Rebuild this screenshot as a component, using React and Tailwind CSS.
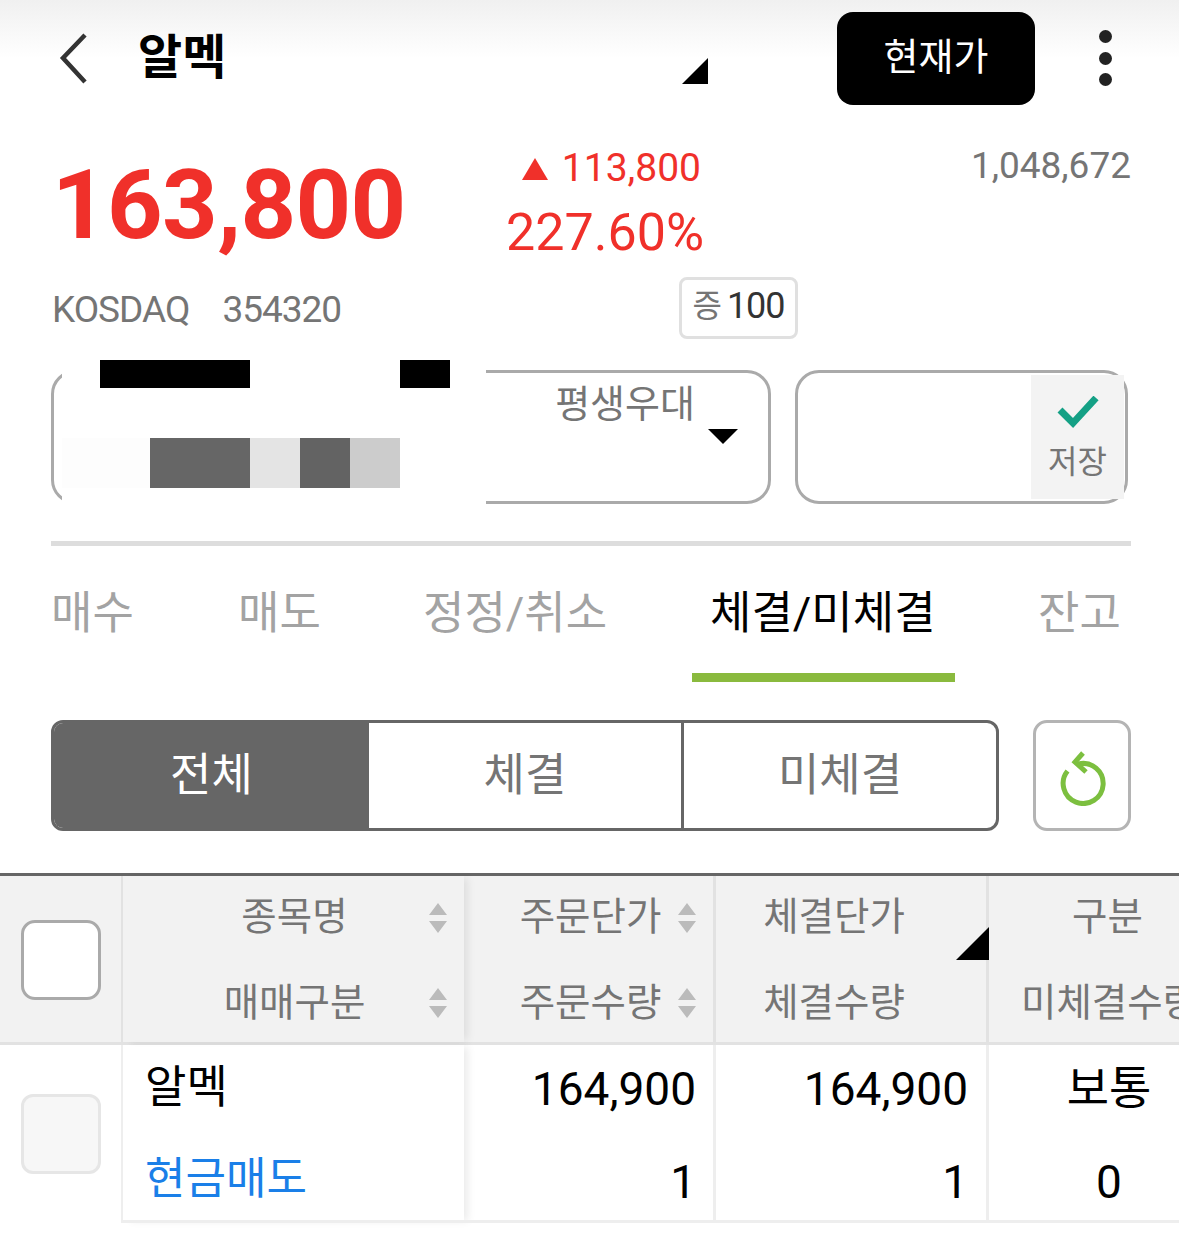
function SortArrows() {
  return (
    <svg width="20" height="30" viewBox="0 0 20 30" className="shrink-0">
      <path d="M10 0 L19 12 L1 12 Z M1 18 L19 18 L10 30 Z" fill="#bbbbbb" />
    </svg>
  );
}

function HeadCell({ label, sort, second, pad = 'pr-[16px]' }) {
  return (
    <div className={`flex h-[83px] items-center justify-between ${second ? 'pt-[5px]' : ''} ${pad}`}>
      <span className="flex-1 whitespace-nowrap text-center text-[38.5px] leading-none text-[#757575]">{label}</span>
      {sort && <SortArrows />}
    </div>
  );
}

function Tab({ label, active }) {
  return (
    <div className={`whitespace-nowrap text-[45px] leading-none ${active ? 'text-black' : 'text-[#a3a3a3]'}`}>
      {label}
    </div>
  );
}

export default function App() {
  return (
    <div className="h-[1238px] w-[1179px] overflow-hidden bg-white font-['Roboto','Noto_Sans_CJK_KR',sans-serif]">
      {/* Header */}
      <div className="flex h-[117px] items-start bg-gradient-to-b from-[#f0f0f0] via-white to-white pt-[12px]">
        <svg width="40" height="56" viewBox="0 0 40 56" className="ml-[54px] mt-[18px]">
          <path d="M31 5 L9 28 L31 52" fill="none" stroke="#333333" strokeWidth="4.5" />
        </svg>
        <div className="ml-[44px] mt-[22px] w-[100px] text-[48px] font-bold leading-none text-black">알멕</div>
        <svg width="28" height="28" viewBox="0 0 28 28" className="ml-[443px] mt-[45px]">
          <path d="M27 1 L27 27 L1 27 Z" fill="#000000" />
        </svg>
        <div className="ml-[128px] flex h-[93px] w-[198px] items-center justify-center rounded-[16px] bg-black pb-[2px] text-[38px] text-white">
          현재가
        </div>
        <div className="ml-[64px] mt-[18px] flex h-[56px] w-[14px] flex-col justify-between">
          <div className="h-[13px] w-[13px] rounded-full bg-[#222222]" />
          <div className="h-[13px] w-[13px] rounded-full bg-[#222222]" />
          <div className="h-[13px] w-[13px] rounded-full bg-[#222222]" />
        </div>
      </div>

      {/* Price */}
      <div className="flex h-[153px] items-start pl-[52px] pr-[48px]">
        <div className="mt-[30px] w-[436px] text-[97px] font-bold leading-[116px] tracking-[-0.6px] text-[#f0302a]">163,800</div>
        <div className="flex w-[216px] flex-col items-end">
          <div className="mt-[28px] flex h-[47px] items-center pr-[3px]">
            <svg width="28" height="24" viewBox="0 0 28 24" className="mr-[13px]">
              <path d="M14 1 L27 23 L1 23 Z" fill="#f0302a" />
            </svg>
            <span className="text-[39px] leading-none text-[#f0302a]">113,800</span>
          </div>
          <div className="mt-[15px] text-[52px] leading-none text-[#f0302a]">227.60%</div>
        </div>
        <div className="mt-[30px] flex-1 text-right text-[37px] leading-none text-[#757575]">1,048,672</div>
      </div>

      {/* Market info */}
      <div className="flex h-[100px] items-start pl-[52px]">
        <div className="mt-[21px] flex w-[627px] gap-[33px] text-[37px] leading-none tracking-[-1px] text-[#757575]">
          <span>KOSDAQ</span>
          <span>354320</span>
        </div>
        <div className="mt-[7px] flex h-[62px] w-[119px] items-center justify-center gap-[5px] rounded-[8px] border-[3px] border-[#e0e0e0] pb-[4px]">
          <span className="text-[32px] leading-none text-[#757575]">증</span>
          <span className="text-[36px] leading-none tracking-[-1px] text-[#333333]">100</span>
        </div>
      </div>

      {/* Account and password */}
      <div className="flex h-[171px] items-start gap-[25px] pl-[51px]">
        <div className="relative flex h-[134px] w-[720px] justify-end rounded-[24px] border-[3px] border-[#aaaaaa] pr-[30px] pt-[8px]">
          {/* masked account number */}
          <div className="absolute left-[8px] -top-[13px] h-[148px] w-[424px] bg-white" />
          <div className="absolute left-[46px] -top-[13px] h-[28px] w-[150px] bg-black" />
          <div className="absolute left-[346px] -top-[13px] h-[28px] w-[50px] bg-black" />
          <div className="absolute left-[8px] top-[65px] flex h-[50px]">
            <div className="w-[88px] bg-[#fdfdfd]" />
            <div className="w-[100px] bg-[#666666]" />
            <div className="w-[50px] bg-[#e4e4e4]" />
            <div className="w-[50px] bg-[#636363]" />
            <div className="w-[50px] bg-[#cccccc]" />
          </div>
          <div className="flex flex-col items-end">
            <span className="mr-[43px] text-[38px] leading-[46px] text-[#757575]">평생우대</span>
            <svg width="30" height="15" viewBox="0 0 30 15" className="mt-[2px]">
              <path d="M0 0 L30 0 L15 15 Z" fill="#000000" />
            </svg>
          </div>
        </div>
        <div className="-ml-[1px] flex h-[134px] w-[333px] justify-end rounded-[24px] border-[3px] border-[#aaaaaa] pr-[1px] pt-[2px]">
          <div className="flex h-[124px] w-[93px] flex-col items-center bg-[#f3f3f3]">
            <svg width="42" height="34" viewBox="0 0 42 34" className="mt-[21px]">
              <path d="M3 14 L16 27 L39 2" fill="none" stroke="#14a085" strokeWidth="7" />
            </svg>
            <span className="mt-[16px] text-[32px] leading-none text-[#757575]">저장</span>
          </div>
        </div>
      </div>

      <div className="ml-[51px] mr-[48px] h-[5px] bg-[#dddddd]" />

      {/* Tabs */}
      <div className="relative flex h-[136px] w-[1179px] items-start pl-[51px] pt-[45px]">
        <div className="w-[187px]"><Tab label="매수" /></div>
        <div className="w-[185px]"><Tab label="매도" /></div>
        <div className="w-[287px]"><Tab label="정정/취소" /></div>
        <div className="w-[328px]"><Tab label="체결/미체결" active /></div>
        <Tab label="잔고" />
        <div className="absolute left-[692px] top-[127px] h-[9px] w-[263px] bg-[#8aba3e]" />
      </div>

      {/* Filter */}
      <div className="mt-[38px] flex h-[111px] gap-[34px] pl-[51px]">
        <div className="flex w-[948px] overflow-hidden rounded-[12px] border-[3px] border-[#666666]">
          <div className="flex w-[315px] items-center justify-center bg-[#666666] text-[45px] text-white">전체</div>
          <div className="flex w-[315px] items-center justify-center border-r-[3px] border-[#666666] text-[45px] text-[#757575]">체결</div>
          <div className="flex flex-1 items-center justify-center text-[45px] text-[#757575]">미체결</div>
        </div>
        <div className="flex w-[98px] items-center justify-center rounded-[14px] border-[3px] border-[#b4b4b4]">
          <svg width="48" height="60" viewBox="0 0 48 60">
            <path d="M20.5 18 A20 20 0 1 1 9.5 25" fill="none" stroke="#7cbf3f" strokeWidth="5" />
            <path d="M25 7 L17 16 L28 26" fill="none" stroke="#7cbf3f" strokeWidth="5" />
          </svg>
        </div>
      </div>

      {/* Table */}
      <div className="mt-[42px] border-t-[3px] border-[#666666]">
        <div className="grid h-[169px] grid-cols-[123px_341px_252px_273px_190px] border-b-[3px] border-[#e2e2e2] bg-[#f2f2f2]">
          <div className="flex items-center justify-center border-r-[2px] border-[#e2e2e2] pt-[1px]">
            <div className="h-[80px] w-[80px] rounded-[14px] border-[3px] border-[#aaaaaa] bg-white" />
          </div>
          <div className="pl-[38px] shadow-[6px_0_8px_-2px_rgba(0,0,0,0.08)]">
            <HeadCell label="종목명" sort />
            <HeadCell label="매매구분" sort second />
          </div>
          <div className="border-r-[3px] border-[#e2e2e2] pl-[40px]">
            <HeadCell label="주문단가" sort />
            <HeadCell label="주문수량" sort second />
          </div>
          <div className="relative border-r-[3px] border-[#e2e2e2] pr-[34px]">
            <HeadCell label="체결단가" pad="pr-0" />
            <HeadCell label="체결수량" pad="pr-0" second />
            <svg width="33" height="33" viewBox="0 0 33 33" className="absolute -right-[3px] top-[51px]">
              <path d="M33 0 L33 33 L0 33 Z" fill="#000000" />
            </svg>
          </div>
          <div className="w-[240px]">
            <div className="flex h-[83px] items-center pl-[83px] text-[38.5px] leading-none text-[#757575]">구분</div>
            <div className="flex h-[83px] items-center whitespace-nowrap pl-[32px] pt-[5px] text-[38.5px] leading-none text-[#757575]">미체결수량</div>
          </div>
        </div>

        <div className="grid h-[178px] grid-cols-[123px_341px_252px_273px_190px] text-[46px] leading-none text-black">
          <div className="flex items-center justify-center border-r-[2px] border-[#eeeeee]">
            <div className="h-[80px] w-[80px] rounded-[12px] border-[3px] border-[#e6e6e6] bg-[#f7f7f7]" />
          </div>
          <div className="border-b-[3px] border-[#eeeeee] pl-[22px] text-[45px] shadow-[6px_0_8px_-2px_rgba(0,0,0,0.08)]">
            <div className="flex h-[87px] items-center pb-[3px]">알멕</div>
            <div className="flex h-[88px] items-center pt-[6px]">
              <span className="text-[44px] text-[#1a7fe8]">현금매도</span>
            </div>
          </div>
          <div className="flex flex-col items-end border-b-[3px] border-r-[3px] border-[#eeeeee] pr-[17px]">
            <div className="flex h-[87px] items-center">164,900</div>
            <div className="flex h-[88px] items-center pt-[12px]">1</div>
          </div>
          <div className="flex flex-col items-end border-b-[3px] border-r-[3px] border-[#eeeeee] pr-[18px]">
            <div className="flex h-[87px] items-center">164,900</div>
            <div className="flex h-[88px] items-center pt-[12px]">1</div>
          </div>
          <div className="border-b-[3px] border-[#eeeeee]">
            <div className="flex w-[240px] flex-col items-center">
              <div className="flex h-[87px] items-center pb-[2px]">보통</div>
              <div className="flex h-[88px] items-center pt-[12px]">0</div>
            </div>
          </div>
        </div>
      </div>
    </div>
  );
}
